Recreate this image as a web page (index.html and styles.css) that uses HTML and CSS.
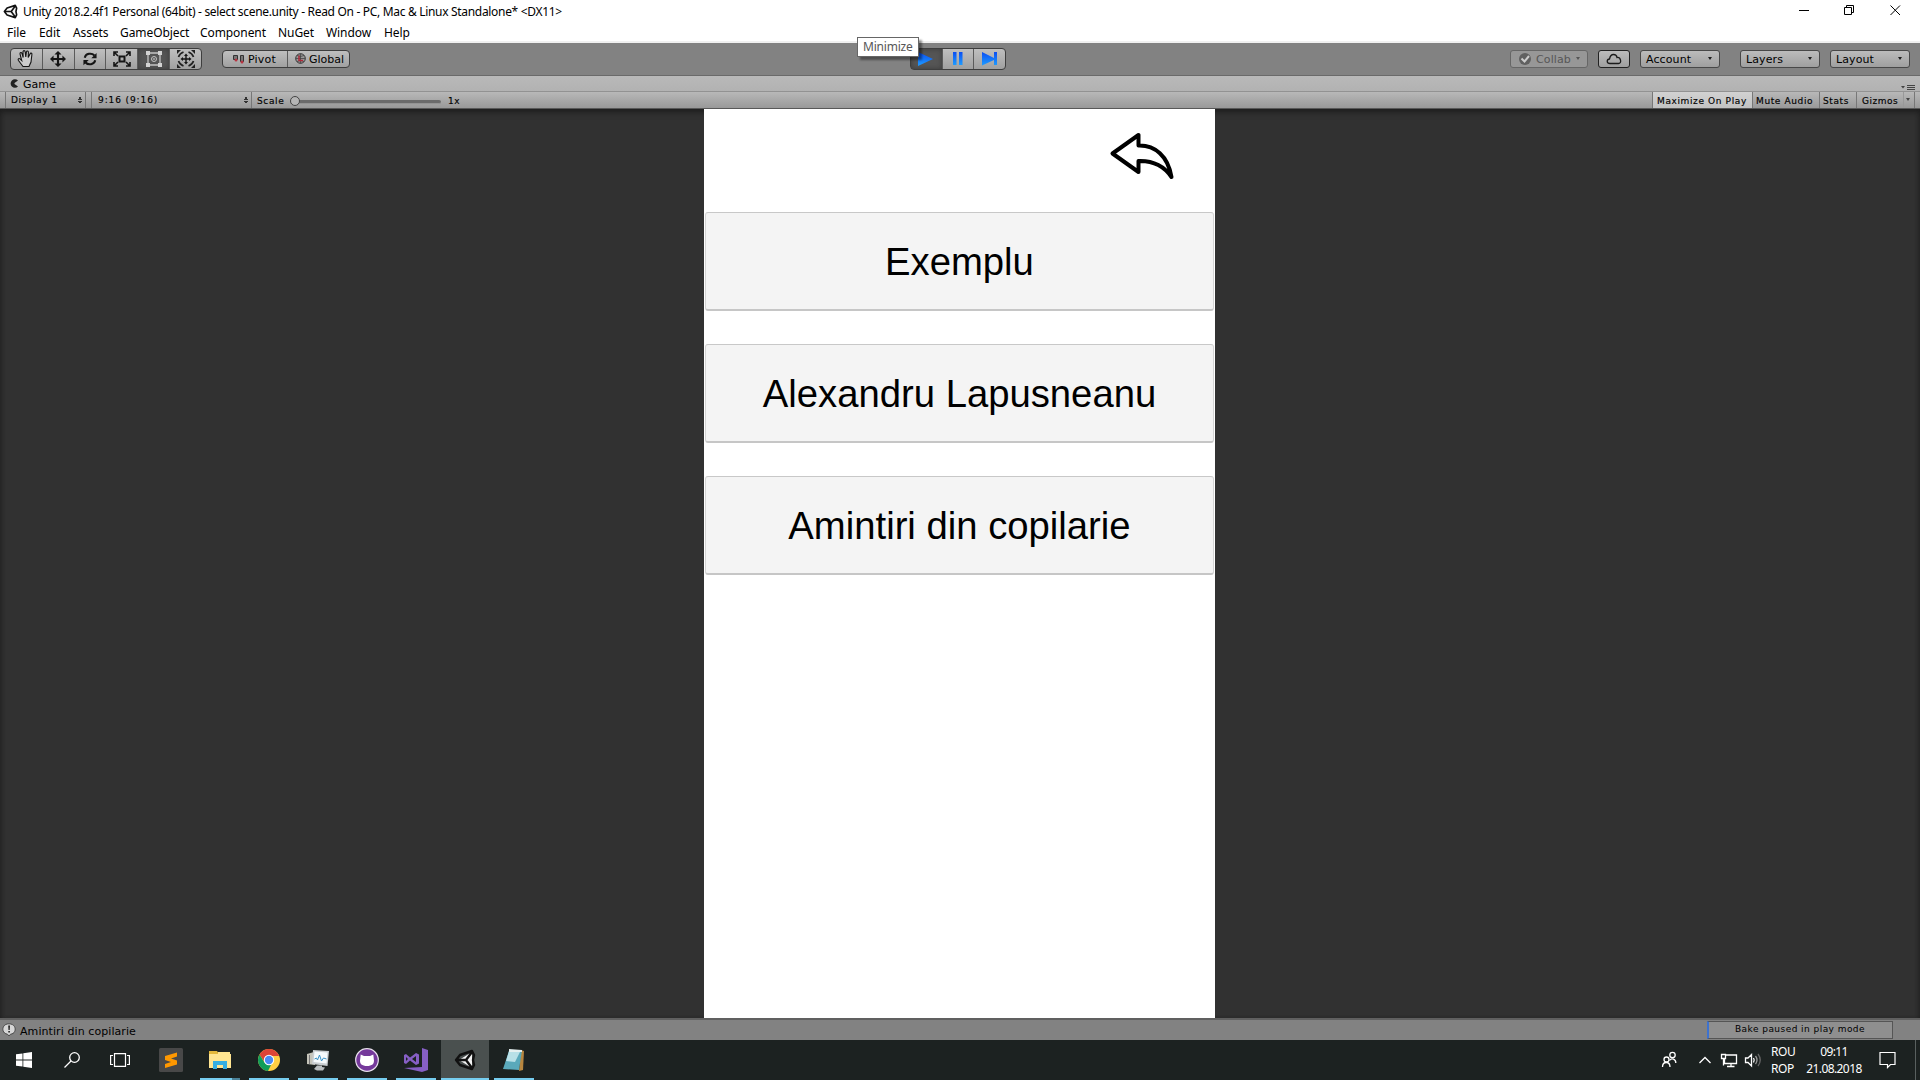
FILE: index.html
```html
<!DOCTYPE html>
<html lang="en">
<head>
<meta charset="utf-8">
<title>Unity 2018.2.4f1 Personal</title>
<link rel="stylesheet" href="styles.css">
</head>
<body>
<svg class="defs" width="0" height="0">
  <symbol id="unity" viewBox="0 0 22 22">
    <path fill="#f4f4f4" d="M5 11 18 3v16z"/>
    <path fill="none" stroke="#111" stroke-width="2.4" stroke-linejoin="round" d="M2 11 6 6l12-4 2 4-1 5 1 5-2 4-12-4zM2 11h10M12 11l6-8M12 11l6 8"/>
  </symbol>
</svg>

<header class="titlebar">
  <svg class="title-icon" width="15" height="15"><use href="#unity"/></svg>
  <span class="title-text">Unity 2018.2.4f1 Personal (64bit) - select scene.unity - Read On - PC, Mac &amp; Linux Standalone* &lt;DX11&gt;</span>
  <svg class="window-controls" width="140" height="21" viewBox="0 0 140 21" fill="none" stroke="#000">
    <path d="M19 10.500h10M64.500 7.500h7v7h-7zM66.500 7.500v-2h7v7h-2M110.500 5.500l9.500 9.500M120 5.500l-9.500 9.500"/>
  </svg>
</header>

<nav class="menubar">
  <span class="m-file">File</span><span class="m-edit">Edit</span><span class="m-assets">Assets</span><span class="m-object">GameObject</span><span class="m-component">Component</span><span class="m-nuget">NuGet</span><span class="m-window">Window</span><span class="m-help">Help</span>
</nav>

<div class="toolbar">
  <div class="group tools">
    <span class="btn"><svg width="20" height="20" viewBox="0 0 20 20" fill="#ccc" stroke="#151515" stroke-width="1.100"><path d="M7 17.500 2.500 11.500c-1-2 .5-2.500 2-1.200l1.200 1.200L4 5c-.3-1.800 1.500-2 2-.5l1.200 4L7 3c0-1.800 2-1.800 2.200 0l.6 5 .6-5c.3-1.500 2-1.300 2 .2l-.2 5.300L14 5c.5-1.500 2.200-1 1.900.5L15 13l-2 4.500z"/></svg></span>
    <span class="btn"><svg width="16" height="16" viewBox="0 0 18 18" fill="#151515"><path d="M9 0l4 4h-2.800v3.800H14V5l4 4-4 4v-2.800h-3.800V14H13l-4 4-4-4h2.800v-3.800H4V13L0 9l4-4v2.800h3.800V4H5z"/></svg></span>
    <span class="btn"><svg width="16" height="14" viewBox="0 0 18 16" fill="none" stroke="#151515" stroke-width="2.300"><path d="M3 6.500c1-5 8-6 11-2.500M15 9.500c-1 5-8 6-11 2.500"/><path fill="#151515" stroke="none" d="M16.500 1v6h-6zM1.500 15V9h6z"/></svg></span>
    <span class="btn"><svg width="18" height="16" viewBox="0 0 18 16" fill="none" stroke="#151515" stroke-width="1.600"><path d="M6.500 5.500h5v5h-5z" stroke-width="2"/><path d="M5 1H1v4M1 1l4 4M13 1h4v4M17 1l-4 4M1 11v4h4M1 15l4-4M17 11v4h-4M17 15l-4-4"/></svg></span>
    <span class="btn active"><svg width="18" height="18" viewBox="0 0 18 18" fill="none" stroke="#c4c4c4"><path stroke-width="1.300" d="M3 3h12v12H3z"/><circle cx="9" cy="9" r="2.500"/><path fill="#d2d2d2" stroke="none" d="M1 1h4v4H1zM13 1h4v4h-4zM1 13h4v4H1zM13 13h4v4h-4zM8.300 8.300h1.400v1.400H8.300z"/></svg></span>
    <span class="btn"><svg width="20" height="18" viewBox="0 0 20 18"><path fill="#151515" d="M10 3.500l2 2.500h-1.300v2.300H13V7l2.500 2-2.500 2V9.700h-2.300V12H12l-2 2.500L8 12h1.300V9.700H7V11L4.500 9 7 7v1.300h2.300V6H8z"/><path fill="none" stroke="#222" stroke-width="1.700" d="M2.500 7c.8-2.500 2.500-4 5-5M12.500 2c2.500 1 4.200 2.500 5 5M17.500 11c-.8 2.500-2.500 4-5 5M7.500 16c-2.500-1-4.200-2.500-5-5"/><path fill="#222" d="M1 0h4L1 4zM15 0h4v4zM1 14v4h4zM19 14v4h-4z"/></svg></span>
  </div>
  <div class="group pivots">
    <span class="btn"><svg width="12" height="10" viewBox="0 0 12 10"><path fill="#777" stroke="#333" d="M.5 1.500h4v4h-4zM7.500 1.500h3v6h-3z"/><circle cx="3" cy="6" r="1.500" fill="#b83240"/><circle cx="9" cy="8" r="1.500" fill="#b83240"/></svg><span class="t-pivot">Pivot</span></span>
    <span class="btn"><svg width="11" height="11" viewBox="0 0 11 11" fill="none"><circle cx="5.500" cy="5.500" r="4.800" fill="#999" stroke="#333"/><path stroke="#444" stroke-width=".8" d="M.7 5.500h9.600M5.500.7v9.600M2 2.500q3.500 2 7 0M2 8.500q3.500-2 7 0"/><path stroke="#b02838" stroke-width="1.500" d="M4 2.500v5h4"/></svg><span class="t-global">Global</span></span>
  </div>
  <div class="group player">
    <span class="btn active"><svg width="16" height="14" viewBox="0 0 16 14"><path fill="url(#blue)" d="M0 0l15 7-15 7z"/></svg></span>
    <span class="btn"><svg width="10" height="14" viewBox="0 0 10 14"><path fill="url(#blue)" d="M0 0h3.500v13H0zM6 0h3.500v13H6z"/></svg></span>
    <span class="btn"><svg width="16" height="14" viewBox="0 0 16 14"><defs><linearGradient id="blue" x2="0" y2="1"><stop stop-color="#0b4df2"/><stop offset="1" stop-color="#1e9cff"/></linearGradient></defs><path fill="url(#blue)" d="M0 0l12 6V0h3v13h-3V8L0 13.500z"/></svg></span>
    <span class="tooltip">Minimize</span>
  </div>
  <div class="drop collab"><svg width="12" height="12" viewBox="0 0 12 12"><circle cx="6" cy="6" r="6" fill="#606060"/><path fill="none" stroke="#ccc" stroke-width="2" d="M2.500 5.500l3 3L10 3"/></svg><span class="t-collab">Collab</span><i class="caret"></i></div>
  <div class="drop cloud"><svg width="16" height="12" viewBox="0 0 16 12"><path fill="none" stroke="#1b1b1b" stroke-width="1.300" d="M4 10.500C.5 10.500.3 6.500 3.500 6 4 3.500 4.500 1.500 7.500 1.500c2.300 0 3.300 1.500 3.500 3 4-.5 5 6 1.500 6z"/></svg></div>
  <div class="drop account"><span>Account</span><i class="caret"></i></div>
  <div class="drop layers"><span>Layers</span><i class="caret"></i></div>
  <div class="drop layout"><span>Layout</span><i class="caret"></i></div>
</div>

<div class="tabbar">
  <svg width="9" height="9" viewBox="0 0 9 9"><path fill="#222" d="M8 1.500A4.300 4.300 0 1 0 8 7.500L4.500 5V4z"/></svg>
  <span class="t-game">Game</span>
  <svg class="tab-menu" width="14" height="6" viewBox="0 0 14 6"><path fill="#444" d="M0 1h4L2 3.500zM6 0h8v1H6zM6 2h8v1H6zM6 4h8v1H6z"/></svg>
</div>

<div class="gamebar">
  <div class="select display"><span>Display 1</span><i class="updown"></i></div>
  <div class="select aspect"><span>9:16 (9:16)</span><i class="updown"></i></div>
  <div class="scale"><span class="t-scale">Scale</span><div class="slider"><i class="knob"></i></div><span class="t-one">1x</span></div>
  <div class="toggle max">Maximize On Play</div>
  <div class="toggle mute">Mute Audio</div>
  <div class="toggle stats">Stats</div>
  <div class="toggle gizmos">Gizmos</div>
  <div class="toggle more"><i class="caret"></i></div>
</div>

<main class="game">
  <div class="screen">
    <div class="back"><svg width="66" height="50" viewBox="0 0 66 50"><path fill="none" stroke="#000" stroke-width="4" stroke-linejoin="round" d="M3.500 22.500 29.500 4v10.500C46 14 59 25 62.500 46 55 35 43 29.500 29.500 30v11z"/></svg></div>
    <div class="story">Exemplu</div>
    <div class="story">Alexandru Lapusneanu</div>
    <div class="story">Amintiri din copilarie</div>
  </div>
</main>

<div class="status">
  <svg width="15" height="14" viewBox="0 0 15 14"><path fill="#d6d6d6" stroke="#4a4a4a" d="M7 .8c8 0 8 10 1.500 10.400L7 13l-1.500-1.800C-1 10.500-.8.8 7 .8z"/><path fill="#222" d="M6.200 2.500h1.800l-.3 4.500h-1.200zM6.300 8h1.600v1.500H6.300z"/></svg>
  <span class="t-status">Amintiri din copilarie</span>
  <div class="bake"><span>Bake paused in play mode</span></div>
</div>

<footer class="taskbar">
  <div class="sys"><svg width="16" height="16" viewBox="0 0 16 16" fill="#fff"><path d="M0 2.300 6.500 1.400v6.200H0zM7.300 1.200 16 0v7.600H7.300zM0 8.400h6.500v6.200L0 13.700zM7.300 8.400H16V16l-8.700-1.200z"/></svg></div>
  <div class="sys"><svg width="16" height="16" viewBox="0 0 16 16" fill="none" stroke="#fff" stroke-width="1.300"><circle cx="10.500" cy="5.500" r="4.800"/><path d="M7 9 .5 15.500"/></svg></div>
  <div class="sys"><svg width="20" height="14" viewBox="0 0 20 14" fill="none" stroke="#fff" stroke-width="1.200"><path d="M4.500.600h11v12.800h-11zM3 2.500H.6v9H3M17 2.500h2.400v9H17"/></svg></div>
  <div class="apps">
    <div class="app"><svg width="24" height="24" viewBox="0 0 24 24"><rect width="24" height="24" rx="1.500" fill="#484848"/><path fill="#ff9800" d="M6 8 18 4.500v4l-6 2 6 2v4L6 20v-4l6-2-6-2z"/></svg></div>
    <div class="app open stacked"><svg width="22" height="20" viewBox="0 0 22 20"><path fill="#e4b83b" d="M0 1h8l2 3h12v14H0z"/><path fill="#ffe591" d="M0 4h22v14H0z"/><path fill="#ffe591" d="M9 2h12v4H9z"/><path fill="#35aee2" d="M4 11h14v8h-4v-4H8v4H4z"/></svg></div>
    <div class="app open"><svg width="22" height="22" viewBox="0 0 22 22"><circle cx="11" cy="11" r="11" fill="#ffce44"/><path fill="#dc4437" d="M1.500 5.500A11 11 0 0 1 20.500 5.500l.5 1.500H11l-4.500 6z"/><path fill="#109d59" d="M1.500 5.500 6.500 13.500 14 14l-4 8A11 11 0 0 1 1.500 5.500z"/><circle cx="11" cy="11" r="5.200" fill="#fff"/><circle cx="11" cy="11" r="4.200" fill="#4a8af4"/></svg></div>
    <div class="app open"><svg width="24" height="22" viewBox="0 0 24 22"><path fill="#c4c4ba" d="M1 5l7-2 1 13-8-1z"/><path fill="#777" d="M3 6v9h1V6z"/><path fill="#c9ced1" d="M7 1l16 1-1.500 15L6 15z"/><path fill="#f5fafc" d="M8.500 2.500l13 1-1 11L7.500 13z"/><path fill="none" stroke="#3a93c8" d="M8.500 10l2-1 1 2 2-5 2 6 2-3 3 1"/><path fill="#b9bec0" d="M11 16.500h5V18l3 .5-2 3h-6L8 20z"/></svg></div>
    <div class="app open"><svg width="24" height="24" viewBox="0 0 24 24"><circle cx="12" cy="12" r="11.300" fill="#75399b" stroke="#e8e0ed" stroke-width="1.200"/><path fill="#fff" d="M5.700 6.500 9 8h6l3.300-1.500.5 4.500c1 5-2 7-6.800 7s-7.800-2-6.800-7z"/></svg></div>
    <div class="app open"><svg width="24" height="24" viewBox="0 0 24 24"><path fill="#865fc5" fill-rule="evenodd" d="M18 0l6 2v20l-6 2L0 20l18-1zM0 7 2 6l4 3.500 6-4.500 3 1.500v9L12 17l-6-4.500L2 16l-2-1zm2 2v4l2-2zm6 2 4 3V8z"/></svg></div>
    <div class="app open current"><svg width="22" height="22"><use href="#unity"/></svg></div>
    <div class="app open"><svg width="24" height="24" viewBox="0 0 24 24"><path fill="#b7863f" d="M19 2l3 1-1 19-4 1z"/><path fill="#5aa9bb" d="M7 3l13-1-3 20-16-1z"/><path fill="#b8e0e7" d="M7 3l12-1-6 12-9-1z"/><path fill="#e6f0f0" d="M7 1l13 1v2L7 4z"/></svg></div>
  </div>
  <div class="tray">
    <svg width="150" height="40" viewBox="1660 0 150 40" fill="none" stroke="#fff" stroke-width="1.300">
      <circle cx="1672.500" cy="15" r="2.700"/><circle cx="1666.500" cy="19.500" r="2.500"/><path d="M1662.500 27c0-6 7.500-6 7.500 0M1669.500 20.500c2-3 6.500-1.500 6.300 2.500"/>
      <path d="M1699.500 23l5.500-5.500 5.500 5.500"/>
      <path d="M1726 15h10.500v8.500h-12V19M1731 23.500v3M1727 26.500h7.500M1721.500 14.500h4v4h-4zM1723.500 18.500v7"/>
      <path d="M1745.500 18h2.500l3.500-3.500v11.500l-3.500-3.500h-2.500zM1753.500 18q1.500 2.200 0 4.500"/><path stroke="#999" d="M1755.500 16q3 4 0 8"/><path stroke="#666" d="M1758 14q4.500 6 0 12"/>
    </svg>
    <div class="lang"><span class="t-rou">ROU</span><span class="t-rop">ROP</span></div>
    <div class="clock"><span class="t-time">09:11</span><span class="t-date">21.08.2018</span></div>
    <svg class="note" width="18" height="18" viewBox="0 0 18 18" fill="none" stroke="#fff" stroke-width="1.200"><path d="M1 1.500h15v12h-4.500l-3 3v-3H1z"/></svg>
    <i class="peek"></i>
  </div>
</footer>
</body>
</html>
```
FILE: styles.css
```css
* { box-sizing: border-box; }
html, body { margin: 0; width: 1920px; height: 1080px; overflow: hidden; }
body { display: flex; flex-direction: column; background: #fff; color: #000; font-family: "Noto Sans", sans-serif; white-space: nowrap; }
svg { display: block; flex: none; overflow: visible; }
.defs { position: absolute; }

.titlebar { display: flex; height: 21px; flex: none; align-items: center; padding: 2px 0 0 3px; font-size: 12px; }
.title-text { margin-left: 5px; letter-spacing: -.315px; }
.window-controls { margin: -2px 0 0 auto; }

.menubar { display: flex; height: 22px; flex: none; padding-left: 7px; border-bottom: 2px solid #f0f0f0; font-size: 12px; line-height: 23px; letter-spacing: -.08px; }
.menubar span { flex: none; }
.m-file { width: 32px; }
.m-edit { width: 34px; }
.m-assets { width: 47px; }
.m-object { width: 80px; }
.m-component { width: 78px; }
.m-nuget { width: 48px; }
.m-window { width: 58px; }

.toolbar { display: flex; height: 33px; flex: none; align-items: center; padding: 0 10px 1px; background: #828282; border-bottom: 1px solid #6a6a6a; font: 11px "DejaVu Sans", sans-serif; }
.group { position: relative; display: flex; border: 1px solid #3e3e3e; border-radius: 4px; background: linear-gradient(#bfbfbf, #a0a0a0); }
.btn { display: flex; flex: 1; align-items: center; justify-content: center; border-left: 1px solid #5b5b5b; }
.btn:first-child { border-left: 0; }
.btn.active { background: #555; box-shadow: inset 0 0 5px #3b3b3b; }
.tools { width: 192px; height: 22px; }
.pivots { width: 128px; height: 18px; margin-left: 20px; }
.pivots .btn { justify-content: flex-start; padding-left: 10px; gap: 3px; }
.pivots .btn + .btn { padding-left: 7px; gap: 3px; }
.pivots .btn > span, .drop > span { margin-top: 1px; }
.t-pivot { letter-spacing: .2px; }
.player { width: 96px; height: 22px; margin-left: 560px; }
.tooltip { position: absolute; left: -54px; top: -12px; width: 62px; height: 20px; padding-left: 5px; border: 1px solid #666; background: #fff; box-shadow: 3px 3px 2px rgba(0,0,0,.4); color: #575757; font: 12px/18px "Noto Sans", sans-serif; letter-spacing: -.2px; }
.drop { display: flex; height: 18px; align-items: center; justify-content: space-between; padding: 0 7px 0 5px; border: 1px solid #484848; border-radius: 3px; background: linear-gradient(#bcbcbc, #9f9f9f); letter-spacing: .1px; }
.caret { border: 2.5px solid transparent; border-top: 3px solid #1d1d1d; border-bottom: 0; }
.collab { width: 78px; margin-left: auto; padding-left: 8px; color: #565656; border-color: #666; background: #979797; }
.collab .caret { border-top-color: #555; }
.cloud { width: 32px; margin-left: 10px; justify-content: center; padding: 0; border-color: #222; }
.account { width: 80px; margin-left: 10px; }
.layers { width: 80px; margin-left: 20px; }
.layout { width: 80px; margin-left: 10px; }

.tabbar { display: flex; height: 16px; flex: none; align-items: center; padding: 0 5px 0 10px; background: linear-gradient(#b9b9b9, #b2b2b2); border-bottom: 1px solid #929292; font: 11px "DejaVu Sans", sans-serif; }
.t-game { margin: 2px 0 0 4px; }
.tab-menu { margin: 8px 0 0 auto; }

.gamebar { display: flex; height: 17px; flex: none; padding: 0 5px; background: linear-gradient(#b8b8b8, #999); border-bottom: 1px solid #585858; font: 9px/18px "DejaVu Sans", sans-serif; letter-spacing: .62px; -webkit-text-stroke: .15px #000; }
.select { display: flex; align-items: center; justify-content: space-between; padding: 0 3px 0 6px; border-left: 1px solid #777; border-right: 1px solid #777; }
.display { width: 81px; padding-left: 5px; letter-spacing: .55px; }
.aspect { width: 161px; margin-left: 5px; letter-spacing: .9px; }
.updown { width: 4px; height: 6px; background: linear-gradient(#333, #333) 0 2px / 4px 1px no-repeat, linear-gradient(#333, #333) 1px 0 / 2px 2px no-repeat, linear-gradient(#333, #333) 0 4px / 4px 1px no-repeat, linear-gradient(#333, #333) 1px 5px / 2px 1px no-repeat; }
.scale { display: flex; align-items: center; padding: 2px 0 0 5px; }
.t-scale { width: 33px; }
.slider { display: flex; align-items: center; width: 151px; height: 4px; margin-top: 1px; border-radius: 2px; background: #6b6b6b; border-bottom: 1px solid #949494; }
.knob { width: 10px; height: 10px; flex: none; border: 1px solid #444; border-radius: 50%; background: #b5b5b5; }
.t-one { margin-left: 7px; }
.toggle { padding-left: 4px; border-left: 1px solid #777; }
.max { width: 100px; margin-left: auto; background: linear-gradient(#d2d2d2, #c2c2c2); }
.mute { width: 67px; padding-left: 3px; }
.stats { width: 37px; padding-left: 3px; }
.gizmos { width: 47px; padding-left: 5px; letter-spacing: .5px; }
.more { display: flex; width: 12px; align-items: center; padding-left: 2px; border-left-color: #999; border-right: 1px solid #777; }
.more .caret { margin-top: -2px; border-top-color: #444; }

.game { display: flex; height: 909px; flex: none; padding-left: 704px; background: #313131; box-shadow: inset 0 6px 6px -3px #1e1e1e, inset 3px 0 4px -2px #222, inset -3px 0 4px -2px #222; }
.screen { display: flex; width: 511px; flex-direction: column; gap: 33px; padding: 0 1px; background: #fff; }
.back { height: 70px; padding: 22px 0 0 404px; }
.story { height: 99px; flex: none; border: 1px solid #d4d4d4; border-top-color: #c8c8c8; border-bottom: 2px solid #c6c6c6; border-radius: 3px; background: #f4f4f4; text-align: center; font: 38.25px/97px "Liberation Sans", Arial, sans-serif; }

.status { display: flex; height: 22px; flex: none; align-items: center; padding: 0 27px 0 2px; background: #828282; border-top: 2px solid #606060; font: 11px "DejaVu Sans", sans-serif; }
.t-status { margin: 2px 0 0 3px; letter-spacing: .08px; }
.bake { width: 186px; height: 18px; margin-left: auto; padding-left: 26px; border: 1px solid #555; border-left: 2px solid #3d72cf; background: #8f8f8f; font-size: 9px; line-height: 15px; letter-spacing: .45px; }

.taskbar { display: flex; height: 40px; flex: none; background: #1c2221; color: #fff; font-size: 12px; }
.sys { display: flex; width: 48px; align-items: center; justify-content: center; }
.apps { display: flex; gap: 1px; margin-left: 3px; }
.app { display: flex; width: 48px; align-items: center; justify-content: center; }
.open { background: linear-gradient(#76cdef, #76cdef) 4px 38px / 40px 2px no-repeat; }
.stacked { background: linear-gradient(90deg, #76cdef 32px, #4b8298 32px) 4px 38px / 40px 2px no-repeat; }
.current { background: linear-gradient(#76cdef, #76cdef) 0 38px / 48px 2px no-repeat, #4a504f; }
.tray { display: flex; margin-left: auto; align-items: center; }
.tray > svg:first-child { margin-left: -1px; }
.lang { display: flex; width: 30px; flex-direction: column; margin-left: -39px; line-height: 17px; letter-spacing: -.4px; }
.clock { display: flex; width: 66px; flex-direction: column; align-items: center; line-height: 17px; letter-spacing: -.6px; }
.note { margin: 0 18px 0 12px; }
.peek { width: 1px; height: 40px; margin-right: 4px; background: #59605f; }
```
